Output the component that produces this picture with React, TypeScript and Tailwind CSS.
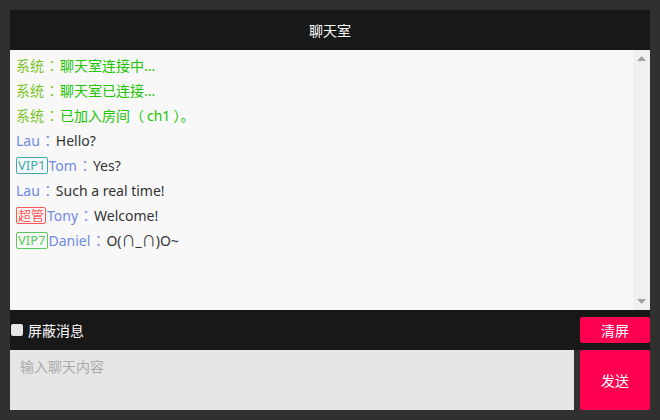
import React from "react";

type Msg = {
  badge?: { text: string; cls: string };
  name: string;
  nameCls: string;
  text: React.ReactNode;
  textCls: string;
};

const Colon = () => <span className="font-['Noto_Sans_CJK_JP',sans-serif] px-[1px]">：</span>;

const messages: Msg[] = [
  { name: "系统", nameCls: "text-[#7cc427]", text: "聊天室连接中...", textCls: "text-[#20c400]" },
  { name: "系统", nameCls: "text-[#7cc427]", text: "聊天室已连接...", textCls: "text-[#20c400]" },
  {
    name: "系统",
    nameCls: "text-[#7cc427]",
    text: (
      <>
        已加入房间<span className="font-['Noto_Sans_CJK_JP',sans-serif] pr-[3px]">（</span>ch1
        <span className="font-['Noto_Sans_CJK_JP',sans-serif] pl-[3px]">）</span>。
      </>
    ),
    textCls: "text-[#20c400]",
  },
  { name: "Lau", nameCls: "text-[#6f8ae6]", text: "Hello?", textCls: "text-[#333]" },
  {
    badge: { text: "VIP1", cls: "border-[#3aabab] text-[#3aabab]" },
    name: "Tom",
    nameCls: "text-[#6f8ae6]",
    text: "Yes?",
    textCls: "text-[#333]",
  },
  { name: "Lau", nameCls: "text-[#6f8ae6]", text: "Such a real time!", textCls: "text-[#333]" },
  {
    badge: { text: "超管", cls: "border-[#f55] text-[#f55]" },
    name: "Tony",
    nameCls: "text-[#6f8ae6]",
    text: "Welcome!",
    textCls: "text-[#333]",
  },
  {
    badge: { text: "VIP7", cls: "border-[#5cc95c] text-[#5cc95c]" },
    name: "Daniel",
    nameCls: "text-[#6f8ae6]",
    text: "O(∩_∩)O~",
    textCls: "text-[#333]",
  },
];

export default function App() {
  return (
    <div className="w-[660px] h-[420px] bg-[#303030] p-[10px] font-['Noto_Sans','Noto_Sans_CJK_SC',sans-serif] text-[14px]">
      <div className="flex flex-col w-[640px] h-[400px]">
        {/* Title bar */}
        <div className="h-[40px] bg-[#181818] flex items-center justify-center text-white">
          聊天室
        </div>

        {/* Messages + scrollbar */}
        <div className="h-[260px] bg-[#f8f8f8] flex">
          <div className="flex-1 pt-[3px] pl-[6px] overflow-hidden">
            {messages.map((m, i) => (
              <div key={i} className="h-[25px] leading-[25px] flex items-center whitespace-nowrap">
                {m.badge && (
                  <span
                    className={`inline-flex items-center h-[17px] px-[1px] mr-[1px] border rounded-[2px] text-[13px] leading-none ${m.badge.cls}`}
                  >
                    {m.badge.text}
                  </span>
                )}
                <span className={m.nameCls}>
                  {m.name}
                  <Colon />
                </span>
                <span className={m.textCls}>{m.text}</span>
              </div>
            ))}
          </div>
          <div className="w-[17px] bg-[#f0f0f0] flex flex-col items-center justify-between py-[6px]">
            <svg width="9" height="5" viewBox="0 0 9 5">
              <path d="M4.5 0 L9 5 L0 5 Z" fill="#a3a3a3" />
            </svg>
            <svg width="9" height="5" viewBox="0 0 9 5">
              <path d="M0 0 L9 0 L4.5 5 Z" fill="#a3a3a3" />
            </svg>
          </div>
        </div>

        {/* Controls */}
        <div className="h-[40px] bg-[#181818] flex items-center justify-between">
          <label className="flex items-center text-white ml-[1px]">
            <span className="w-[12px] h-[12px] bg-[#e6e6e6] rounded-[2px] mr-[5px]" />
            屏蔽消息
          </label>
          <button className="w-[70px] h-[26px] bg-[#ff0050] text-white rounded-[2px]">清屏</button>
        </div>

        {/* Input */}
        <div className="flex h-[60px] gap-[6px]">
          <div className="flex-1 bg-[#e6e6e6] px-[10px] pt-[6px] text-[#aaa]">输入聊天内容</div>
          <button className="w-[70px] bg-[#ff0050] text-white rounded-[2px]">发送</button>
        </div>
      </div>
    </div>
  );
}
